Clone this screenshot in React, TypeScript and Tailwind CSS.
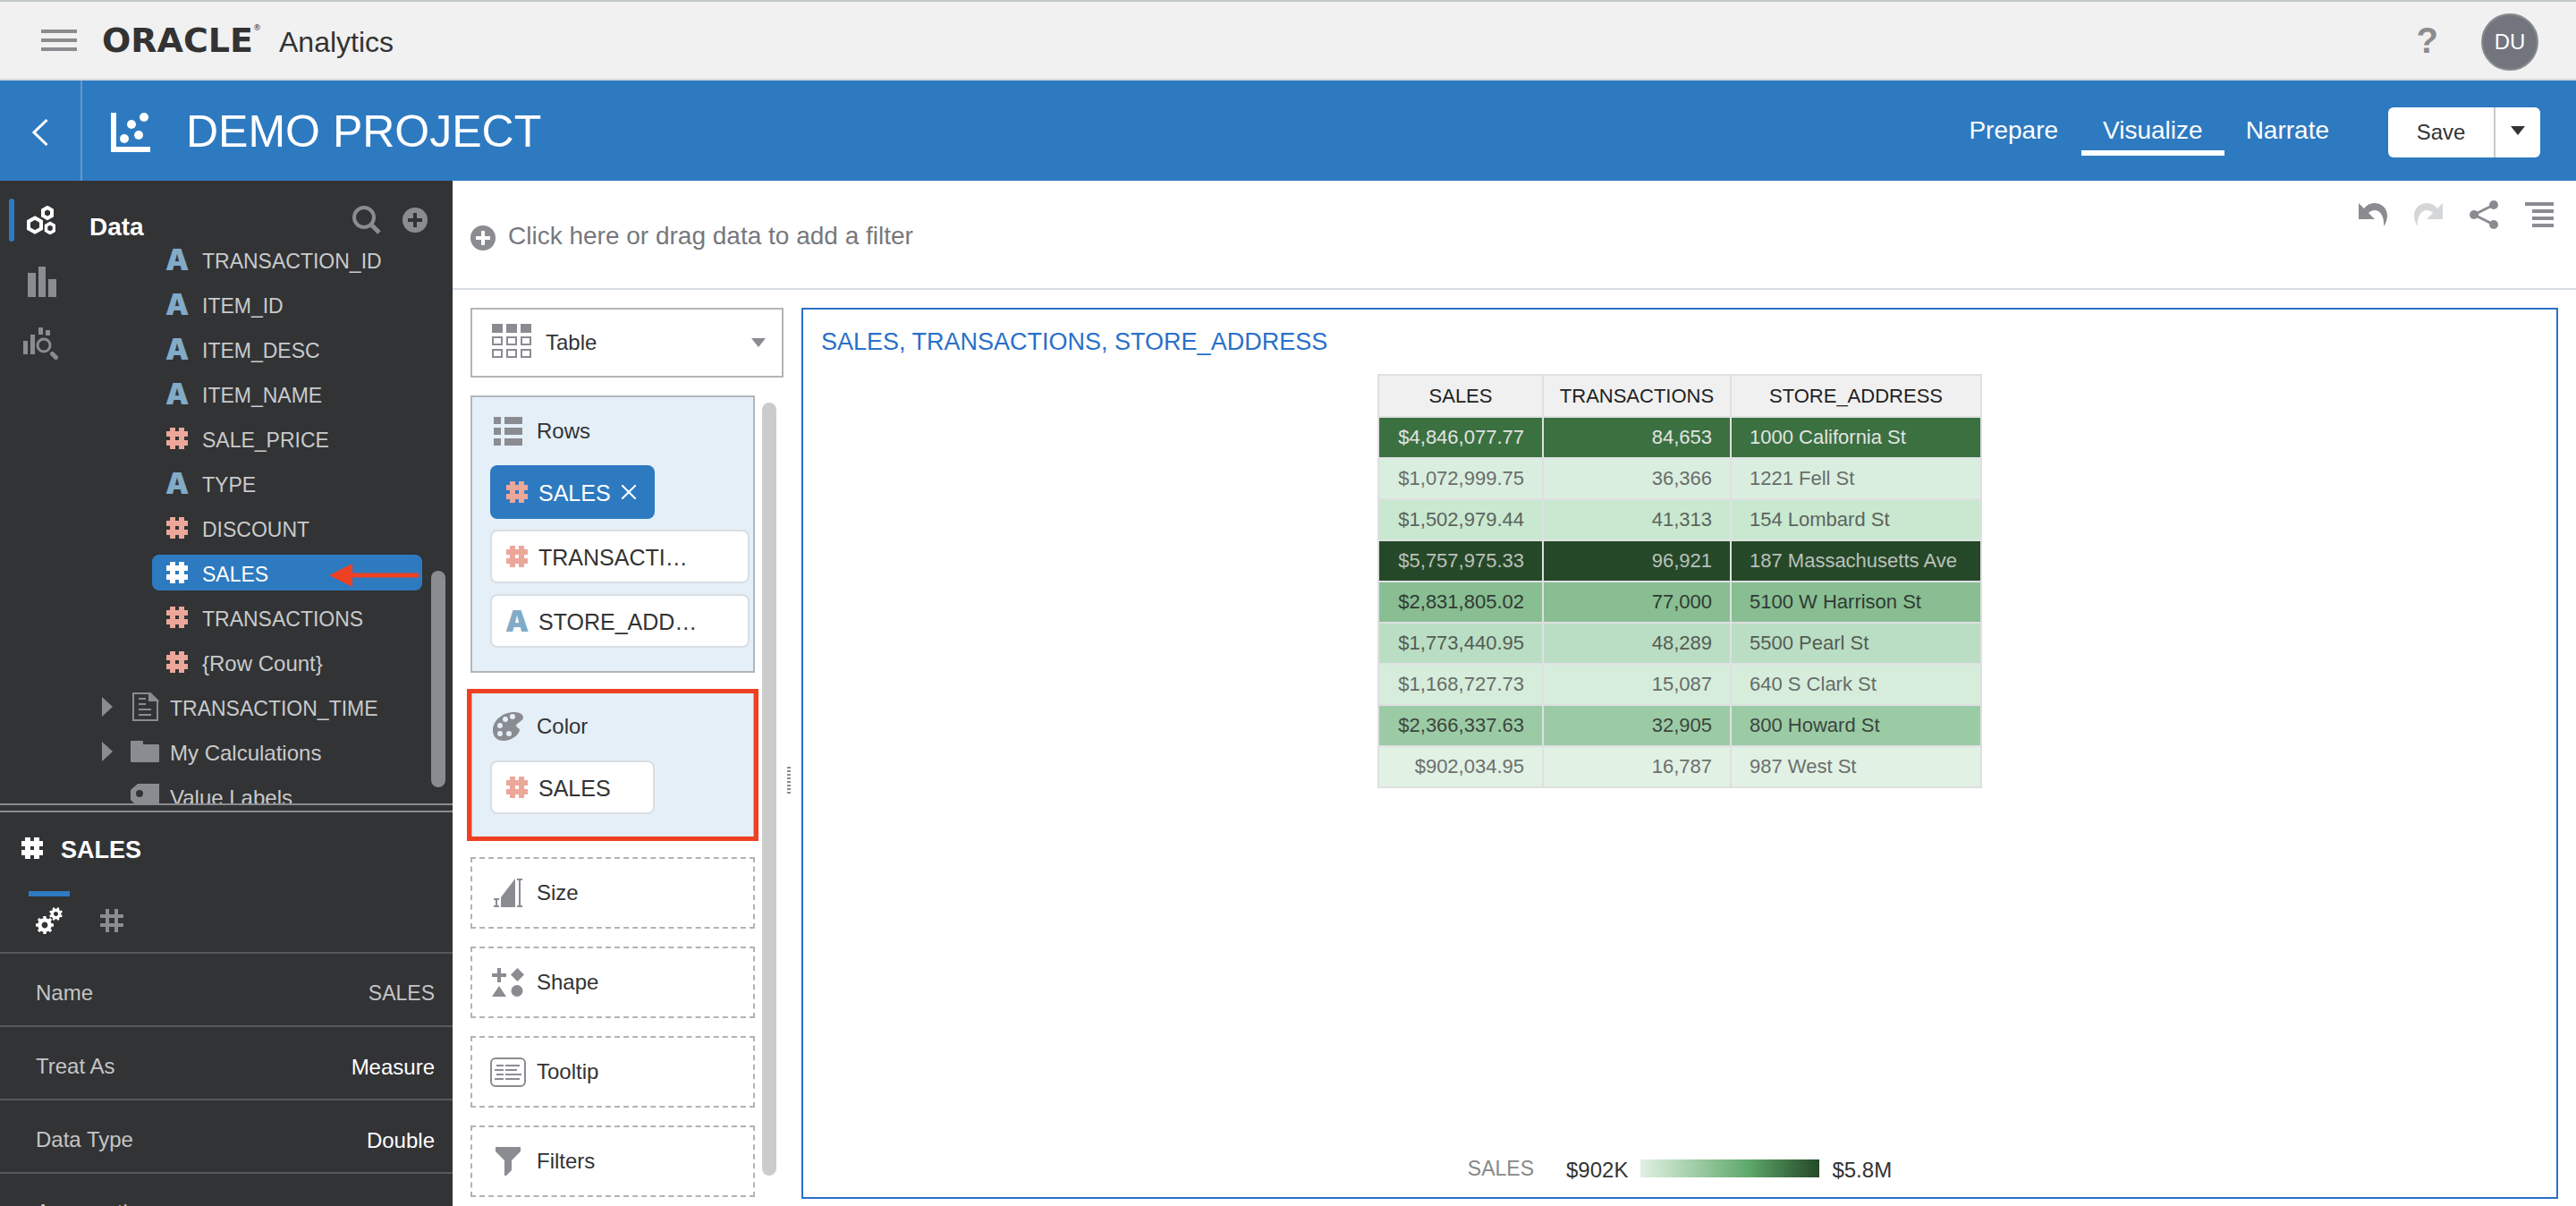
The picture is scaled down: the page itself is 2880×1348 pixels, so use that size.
import React from "react";

type Kind = "attribute" | "measure";

type Field = { name: string; kind: Kind; caps: boolean; selected?: boolean };

const fields: Field[] = [
  { name: "TRANSACTION_ID", kind: "attribute", caps: true },
  { name: "ITEM_ID", kind: "attribute", caps: true },
  { name: "ITEM_DESC", kind: "attribute", caps: true },
  { name: "ITEM_NAME", kind: "attribute", caps: true },
  { name: "SALE_PRICE", kind: "measure", caps: true },
  { name: "TYPE", kind: "attribute", caps: true },
  { name: "DISCOUNT", kind: "measure", caps: true },
  { name: "SALES", kind: "measure", caps: true, selected: true },
  { name: "TRANSACTIONS", kind: "measure", caps: true },
  { name: "{Row Count}", kind: "measure", caps: false },
];

const rows = [
  { sales: "$4,846,077.77", tx: "84,653", store: "1000 California St", tone: "bg-[#3b7041] text-[#e2e4e2]" },
  { sales: "$1,072,999.75", tx: "36,366", store: "1221 Fell St", tone: "bg-[#daeee0] text-[#686e6a]" },
  { sales: "$1,502,979.44", tx: "41,313", store: "154 Lombard St", tone: "bg-[#c9e8d0] text-[#5c645e]" },
  { sales: "$5,757,975.33", tx: "96,921", store: "187 Massachusetts Ave", tone: "bg-[#254928] text-[#bcc0bc]" },
  { sales: "$2,831,805.02", tx: "77,000", store: "5100 W Harrison St", tone: "bg-[#88be92] text-[#303a32]" },
  { sales: "$1,773,440.95", tx: "48,289", store: "5500 Pearl St", tone: "bg-[#badec3] text-[#545c56]" },
  { sales: "$1,168,727.73", tx: "15,087", store: "640 S Clark St", tone: "bg-[#d6eddc] text-[#666c68]" },
  { sales: "$2,366,337.63", tx: "32,905", store: "800 Howard St", tone: "bg-[#9bcba5] text-[#3c463e]" },
  { sales: "$902,034.95", tx: "16,787", store: "987 West St", tone: "bg-[#e1f1e4] text-[#6c706d]" },
];

const properties = [
  { label: "Name", value: "SALES", tone: "text-[23px] text-[#c4c5c6]" },
  { label: "Treat As", value: "Measure", tone: "pt-0.5 text-2xl text-white" },
  { label: "Data Type", value: "Double", tone: "pt-0.5 text-2xl text-white" },
];

function MeasureIcon({ className = "text-[#eba79a]" }: { className?: string }) {
  return (
    <svg className={"h-6 w-6 shrink-0 " + className} viewBox="0 0 24 24" fill="currentColor" aria-hidden="true">
      <rect x="4" y="0" width="6" height="24" />
      <rect x="14" y="0" width="6" height="24" />
      <rect x="0" y="4" width="24" height="6" />
      <rect x="0" y="14" width="24" height="6" />
    </svg>
  );
}

function KindIcon({ kind, selected }: { kind: Kind; selected?: boolean }) {
  if (kind === "measure") {
    return <MeasureIcon className={selected ? "text-white" : "text-[#eba79a]"} />;
  }
  return (
    <span
      aria-hidden="true"
      className="flex h-6 w-6 shrink-0 items-center justify-center font-[Inter,sans-serif] text-[33px] leading-none font-black text-[#82abc8]"
    >
      A
    </span>
  );
}

function PlusCircle({ plus }: { plus: string }) {
  return (
    <svg className="h-7 w-7" viewBox="0 0 28 28" aria-hidden="true">
      <circle cx="14" cy="14" r="14" fill="#8a8c91" />
      <path d="M14 6v16M6 14h16" stroke={plus} strokeWidth="4" />
    </svg>
  );
}

function Gear({ cx, cy, r, turn }: { cx: number; cy: number; r: number; turn: number }) {
  return (
    <g transform={`translate(${cx} ${cy}) rotate(${turn})`}>
      <circle r={r * 0.56} fill="none" stroke="currentColor" strokeWidth={r * 0.44} />
      {[0, 45, 90, 135, 180, 225, 270, 315].map((a) => (
        <rect
          key={a}
          x={-r * 0.17}
          y={-r}
          width={r * 0.34}
          height={r * 0.4}
          rx={r * 0.06}
          fill="currentColor"
          transform={`rotate(${a})`}
        />
      ))}
    </g>
  );
}

function Chip({ kind, children, wide }: { kind: Kind; children: React.ReactNode; wide?: boolean }) {
  return (
    <button
      type="button"
      className={
        "flex h-[60px] items-center gap-3 rounded-lg border-2 border-[#d8dee3] bg-white pl-4 text-[25px] leading-8 text-[#333] " +
        (wide ? "w-[290px]" : "w-[184px]")
      }
    >
      <KindIcon kind={kind} />
      <span className="pt-0.5">{children}</span>
    </button>
  );
}

function EdgeLabel({ icon, children }: { icon: React.ReactNode; children: React.ReactNode }) {
  return (
    <div className="flex h-[76px] items-center gap-3 pl-5 text-2xl text-[#333]">
      <span className="flex w-10 justify-center text-[#8a8c91]">{icon}</span>
      {children}
    </div>
  );
}

const sizeIcon = (
  <svg className="h-8 w-8" viewBox="0 0 32 32" fill="currentColor" aria-hidden="true">
    <path d="M0 22h6v2H4v6h2v2H0v-2h2v-6H0z" />
    <path d="M8 21L24 0v32H8z" />
    <path d="M26 0h6v2h-2v28h2v2h-6v-2h2V2h-2z" />
  </svg>
);

const shapeIcon = (
  <svg className="h-8 w-9" viewBox="0 0 36 32" fill="currentColor" aria-hidden="true">
    <path d="M6 0h4v6h6v4h-6v6H6v-6H0V6h6z" />
    <path d="M28.500 0l7.500 7.500-7.500 7.500L21 7.500z" />
    <path d="M8 20l8 12H0z" />
    <circle cx="28" cy="25.500" r="6.500" />
  </svg>
);

const tooltipIcon = (
  <svg className="h-[34px] w-10" viewBox="0 0 40 34" fill="none" stroke="currentColor" strokeWidth="2" aria-hidden="true">
    <rect x="1" y="2" width="38" height="31" rx="5" />
    <path d="M7 10h8M17 10h16M5 15h10M17 15h13M7 20h8M17 20h18M5 25h10M17 25h16" />
  </svg>
);

const filterIcon = (
  <svg className="h-[34px] w-[30px]" viewBox="0 0 30 34" fill="currentColor" aria-hidden="true">
    <path d="M1 1h28v5L19 16v11l-6 6h-2V16L1 6z" />
  </svg>
);

const dropTargets = [
  { label: "Size", icon: sizeIcon },
  { label: "Shape", icon: shapeIcon },
  { label: "Tooltip", icon: tooltipIcon },
  { label: "Filters", icon: filterIcon },
];

function TopBar() {
  return (
    <header className="flex h-[90px] shrink-0 items-center border-t-2 border-b-2 border-t-[#c3c8c8] border-b-[#d6dade] bg-[#f1f1f1] pr-[42px] pl-[46px]">
      <button type="button" aria-label="Menu" className="flex w-10 flex-col gap-1.5">
        <span className="h-1 bg-[#8b8c8f]" />
        <span className="h-1 bg-[#8b8c8f]" />
        <span className="h-1 bg-[#8b8c8f]" />
      </button>
      <div className="ml-7 flex items-baseline pt-0.5 text-[#333]">
        <span className="flex w-[198px] items-start font-['DejaVu_Sans',sans-serif] text-[38px] leading-10 font-bold">
          ORACLE
          <sup className="text-[9px] leading-[20px] font-normal">®</sup>
        </span>
        <span className="text-[32px] leading-10">Analytics</span>
      </div>
      <button type="button" aria-label="Help" className="ml-auto text-[40px] leading-none font-bold text-[#8b8c8f]">
        ?
      </button>
      <button
        type="button"
        className="mt-1 ml-12 h-16 w-16 rounded-full border-2 border-[#888c8f] bg-[#73757e] text-2xl text-white"
      >
        DU
      </button>
    </header>
  );
}

function ProjectBar() {
  return (
    <div className="flex h-28 shrink-0 items-center bg-[#2e7ac1] pr-10 text-white">
      <button
        type="button"
        aria-label="Back"
        className="flex h-full w-[92px] items-center justify-center border-r-2 border-[#6199cf]"
      >
        <svg className="mt-1 h-[30px] w-[18px]" viewBox="0 0 18 30" fill="none" stroke="currentColor" strokeWidth="3" aria-hidden="true">
          <path d="M16.500 1L2 15l14.500 14" />
        </svg>
      </button>
      <svg className="mt-1 ml-8 h-11 w-11" viewBox="0 0 44 44" fill="currentColor" aria-hidden="true">
        <path d="M0 0h6v38h38v6H0z" />
        <circle cx="15" cy="29" r="5" />
        <circle cx="23" cy="13" r="5" />
        <circle cx="31" cy="25" r="5" />
        <circle cx="37" cy="5" r="5" />
      </svg>
      <h1 className="ml-10 pt-0.5 text-[50px] leading-[56px]">DEMO PROJECT</h1>
      <nav className="ml-auto flex pt-2 text-[28px] leading-10">
        <a href="#prepare" className="h-12 pr-[26px]">Prepare</a>
        <a href="#visualize" className="h-12 border-b-[6px] border-white px-6">Visualize</a>
        <a href="#narrate" className="h-12 pl-6">Narrate</a>
      </nav>
      <div className="mt-1 ml-[66px] flex h-14 overflow-hidden rounded-md bg-white text-[#333]">
        <button type="button" className="w-[120px] border-r-2 border-[#c8cacc] text-2xl">Save</button>
        <button type="button" aria-label="More save options" className="flex w-[50px] items-center justify-center">
          <svg className="mb-1 h-2.5 w-4" viewBox="0 0 16 10" aria-hidden="true">
            <path d="M0 0h16L8 10z" fill="#333" />
          </svg>
        </button>
      </div>
    </div>
  );
}

function Rail() {
  return (
    <nav className="flex w-20 shrink-0 flex-col pt-5 text-[#8a8c91]">
      <button type="button" aria-label="Data" className="flex h-12 items-center pl-2.5 text-white">
        <span className="h-12 w-1.5 rounded-sm bg-[#2e7ac1]" />
        <svg className="ml-3.5 h-8 w-8" viewBox="0 0 32 32" fill="none" stroke="currentColor" strokeWidth="4" aria-hidden="true">
          <path d="M23 2l5 3v6l-5 3-5-3V5z" />
          <path d="M9 13.500l7 4v8l-7 4-7-4v-8z" />
          <path d="M26 19.500l4.500 2.700v5.600L26 30.500l-4.500-2.700v-5.600z" strokeWidth="3.500" />
        </svg>
      </button>
      <button type="button" aria-label="Visualizations" className="mt-7 flex pl-[31px]">
        <svg className="h-[34px] w-8" viewBox="0 0 32 34" fill="currentColor" aria-hidden="true">
          <path d="M0 7h9v27H0zM12 0h8v34h-8zM23 14h9v20h-9z" />
        </svg>
      </button>
      <button type="button" aria-label="Analytics" className="mt-[34px] flex pl-[26px]">
        <svg className="h-9 w-10" viewBox="0 0 40 36" aria-hidden="true">
          <path fill="currentColor" d="M0 15h5v15H0zM8 8h5v22H8zM17 0h5v8h-5zM25 3h5v6h-5z" />
          <circle cx="23" cy="20" r="7" fill="none" stroke="currentColor" strokeWidth="3" />
          <path d="M32.500 29.500l4 4" stroke="currentColor" strokeWidth="5" strokeLinecap="round" />
        </svg>
      </button>
    </nav>
  );
}

function Twisty() {
  return (
    <svg className="h-[22px] w-3" viewBox="0 0 12 22" fill="#8a8c91" aria-hidden="true">
      <path d="M0 0l12 11L0 22z" />
    </svg>
  );
}

function DataTree() {
  return (
    <div className="flex min-w-0 flex-1 flex-col">
      <div className="flex h-[63px] shrink-0 items-start pt-7 pr-7 pl-5">
        <h2 className="pt-1.5 text-[28px] leading-9 font-bold text-white">Data</h2>
        <button type="button" aria-label="Search" className="ml-auto text-[#8a8c91]">
          <svg className="h-8 w-8" viewBox="0 0 32 32" fill="none" stroke="currentColor" aria-hidden="true">
            <circle cx="13" cy="13" r="11" strokeWidth="4" />
            <path d="M21 21l9 9" strokeWidth="5" />
          </svg>
        </button>
        <button type="button" aria-label="Add" className="mt-0.5 ml-6">
          <PlusCircle plus="#323335" />
        </button>
      </div>
      <div className="relative min-h-0 flex-1 overflow-hidden text-[#c9cacb]">
        <ul className="pr-[34px]">
          {fields.map((f) => (
            <li key={f.name} className="flex h-[50px] items-center pl-[90px]">
              <button
                type="button"
                className={
                  "relative flex h-10 w-full items-center gap-4 rounded-lg pl-4 whitespace-nowrap " +
                  (f.caps ? "text-[23px] " : "text-2xl ") +
                  (f.selected ? "bg-[#2e7ac1] text-white" : "")
                }
              >
                <KindIcon kind={f.kind} selected={f.selected} />
                <span className="pt-1 leading-8">{f.name}</span>
                {f.selected && (
                  <svg className="absolute top-2.5 right-1 h-[26px] w-[100px]" viewBox="0 0 100 26" fill="#ee4023" aria-hidden="true">
                    <path d="M0 13L26 0v10.500h74v5H26V26z" />
                  </svg>
                )}
              </button>
            </li>
          ))}
          <li className="flex h-[50px] items-center pl-[34px]">
            <Twisty />
            <svg className="ml-[22px] h-8 w-[30px]" viewBox="0 0 30 32" fill="none" stroke="#8a8c91" strokeWidth="2" aria-hidden="true">
              <path d="M1 1h19l8 8v22H1z" />
              <path d="M19 1v8h9z" fill="#8a8c91" />
              <path d="M7 7h8M7 13h8M7 19h14M7 25h14" />
            </svg>
            <span className="ml-3 pt-1 text-[23px] leading-8">TRANSACTION_TIME</span>
          </li>
          <li className="flex h-[50px] items-center pl-[34px]">
            <Twisty />
            <svg className="ml-5 h-6 w-8" viewBox="0 0 32 24" fill="#8a8c91" aria-hidden="true">
              <path d="M1 0h12q1 0 1 1v3h17q1 0 1 1v18q0 1-1 1H1q-1 0-1-1V1q0-1 1-1z" />
            </svg>
            <span className="ml-3 pt-1 text-2xl leading-8">My Calculations</span>
          </li>
          <li className="flex h-[50px] items-center pl-[66px]">
            <svg className="h-7 w-8" viewBox="0 0 32 28" fill="#8a8c91" aria-hidden="true">
              <path fillRule="evenodd" d="M8 0h24v26H8L0 18V7zM10 7a4 4 0 1 0 0 8 4 4 0 0 0 0-8z" />
            </svg>
            <span className="ml-3 pt-1 text-2xl leading-8">Value Labels</span>
          </li>
        </ul>
        <div className="absolute right-2 bottom-[18px] h-[242px] w-4 rounded-full bg-[#8a8c91]" />
      </div>
    </div>
  );
}

function PropertiesPane() {
  return (
    <section className="h-[450px] shrink-0 overflow-hidden border-t-2 border-[#888b90]">
      <div className="mt-1.5 border-t-2 border-[#888b90]" />
      <div className="flex h-20 items-center gap-5 pl-6 text-white">
        <MeasureIcon className="text-white" />
        <h3 className="pt-1 text-[27px] leading-9 font-bold">SALES</h3>
      </div>
      <div className="flex h-[78px] items-start border-b-2 border-[#56585b] pt-2 pl-8">
        <button type="button" aria-label="General" className="flex w-[46px] flex-col items-center border-t-[6px] border-[#2e7ac1] pt-3 text-white">
          <svg className="h-[30px] w-[30px]" viewBox="0 0 30 30" aria-hidden="true">
            <Gear cx={10} cy={20} r={10} turn={0} />
            <Gear cx={22.5} cy={7.5} r={7.5} turn={22} />
          </svg>
        </button>
        <button type="button" aria-label="Number format" className="mt-5 ml-[34px]">
          <svg className="h-[26px] w-[26px]" viewBox="0 0 26 26" stroke="#8a8c91" strokeWidth="4" aria-hidden="true">
            <path d="M8 0v26M18 0v26M0 8h26M0 18h26" />
          </svg>
        </button>
      </div>
      <dl className="text-2xl text-[#c4c5c6]">
        {properties.map((p) => (
          <div key={p.label} className="flex h-[82px] items-center justify-between border-b-2 border-[#56585b] pt-2 pr-5 pl-10">
            <dt>{p.label}</dt>
            <dd className={p.tone}>{p.value}</dd>
          </div>
        ))}
        <div className="flex h-[82px] items-center pt-1 pl-10">
          <dt>Aggregation</dt>
        </div>
      </dl>
    </section>
  );
}

function FilterBar() {
  return (
    <div className="flex h-[122px] shrink-0 items-center justify-between border-b-2 border-[#d8dde3] pr-[25px] pl-5">
      <button type="button" className="flex items-center gap-3.5 pt-2 text-[28px] leading-9 text-[#77787b]">
        <PlusCircle plus="#ffffff" />
        <span className="pb-1">Click here or drag data to add a filter</span>
      </button>
      <div className="-mt-11 flex items-center gap-[30px] text-[#8a8c91]">
        <button type="button" aria-label="Undo">
          <svg className="h-[26px] w-8" viewBox="0 0 32 26" fill="currentColor" aria-hidden="true">
            <path d="M0 0l6 6C9 2 13 0 17 0c9 0 15 6 15 14 0 5-2 9-4 12 1-11-4-18-10-18-3 0-5 1-7 3l7 7H0z" />
          </svg>
        </button>
        <button type="button" aria-label="Redo" className="text-[#d5d6d8]">
          <svg className="h-[26px] w-8" viewBox="0 0 32 26" fill="currentColor" aria-hidden="true">
            <path d="M32 0l-6 6C23 2 19 0 15 0 6 0 0 6 0 14c0 5 2 9 4 12C3 15 8 8 14 8c3 0 5 1 7 3l-7 7h18z" />
          </svg>
        </button>
        <button type="button" aria-label="Share">
          <svg className="h-8 w-8" viewBox="0 0 32 32" fill="currentColor" aria-hidden="true">
            <circle cx="5" cy="16" r="5" />
            <circle cx="27" cy="5" r="5" />
            <circle cx="27" cy="27" r="5" />
            <path d="M27 5L5 16l22 11" fill="none" stroke="currentColor" strokeWidth="3" />
          </svg>
        </button>
        <button type="button" aria-label="Canvas menu">
          <svg className="h-7 w-8" viewBox="0 0 32 28" fill="currentColor" aria-hidden="true">
            <path d="M0 0h32v4H0zM8 8h24v4H8zM8 16h24v4H8zM8 24h24v4H8z" />
          </svg>
        </button>
      </div>
    </div>
  );
}

function GrammarPanel() {
  return (
    <aside className="flex w-[350px] shrink-0 flex-col gap-5">
      <div className="relative">
        <select
          aria-label="Visualization type"
          className="h-[78px] w-full appearance-none border-2 border-[#b3b5b7] bg-white pl-[82px] text-2xl text-[#333]"
        >
          <option>Table</option>
        </select>
        <svg className="pointer-events-none absolute top-[18px] left-6 h-[38px] w-11" viewBox="0 0 44 38" fill="none" stroke="#8a8c91" strokeWidth="2" aria-hidden="true">
          <path fill="#8a8c91" d="M1 1h10v8H1zM17 1h10v8H17zM33 1h10v8H33z" />
          <path d="M1 15h10v8H1zM17 15h10v8H17zM33 15h10v8H33zM1 29h10v8H1zM17 29h10v8H17zM33 29h10v8H33z" />
        </svg>
        <svg className="pointer-events-none absolute top-[34px] right-5 h-2.5 w-4" viewBox="0 0 16 10" aria-hidden="true">
          <path d="M0 0h16L8 10z" fill="#8a8c91" />
        </svg>
      </div>
      <div className="flex justify-between pr-2">
        <div className="flex w-[318px] flex-col gap-5">
          <section className="border-2 border-[#b3b5b7] bg-[#e5eff8] pb-[26px]">
            <EdgeLabel
              icon={
                <svg className="h-8 w-8" viewBox="0 0 32 32" fill="currentColor" aria-hidden="true">
                  <path d="M0 0h8v8H0zM12 0h20v8H12zM0 12h8v8H0zM12 12h20v8H12zM0 24h8v8H0zM12 24h20v8H12z" />
                </svg>
              }
            >
              Rows
            </EdgeLabel>
            <div className="flex flex-col gap-3 pl-5">
              <button type="button" className="flex h-[60px] w-[184px] items-center gap-3 rounded-lg bg-[#2e7ac1] pl-[18px] text-[25px] leading-8 text-white">
                <MeasureIcon />
                <span className="pt-0.5">SALES</span>
                <svg className="h-4 w-4" viewBox="0 0 16 16" fill="none" stroke="currentColor" strokeWidth="2" aria-hidden="true">
                  <path d="M0 0l16 16M16 0L0 16" />
                </svg>
              </button>
              <Chip kind="measure" wide>TRANSACTI…</Chip>
              <Chip kind="attribute" wide>STORE_ADD…</Chip>
            </div>
          </section>
          <section className="relative border-2 border-[#b3b5b7] bg-[#e5eff8] pb-[26px]">
            <EdgeLabel
              icon={
                <svg className="h-8 w-[34px]" viewBox="0 0 34 32" fill="currentColor" aria-hidden="true">
                  <path d="M34 6C34 2 29 0 24 0 10 0 0 10 0 20c0 8 5 12 12 12 8 0 17-6 18-12 0-2-3-2-4-5 0-3 8-5 8-9z" />
                  <g fill="#e5eff8">
                    <circle cx="8" cy="15" r="3" />
                    <circle cx="14" cy="8" r="3" />
                    <circle cx="22" cy="5" r="3" />
                    <circle cx="8" cy="24" r="3" />
                    <circle cx="18" cy="24" r="3" />
                  </g>
                </svg>
              }
            >
              Color
            </EdgeLabel>
            <div className="pl-5">
              <Chip kind="measure">SALES</Chip>
            </div>
            <div className="pointer-events-none absolute -inset-x-[6px] -inset-y-[4px] border-[5px] border-[#ee4023]" />
          </section>
          {dropTargets.map((t) => (
            <section key={t.label} className="border-2 border-dashed border-[#b3b3b3]">
              <EdgeLabel icon={t.icon}>{t.label}</EdgeLabel>
            </section>
          ))}
        </div>
        <div className="mt-2 mb-6 w-4 rounded-full bg-[#ccc]" />
      </div>
    </aside>
  );
}

function Visualization() {
  return (
    <section className="flex min-w-0 flex-1 flex-col items-center border-2 border-[#2a70c8]">
      <h2 className="mt-4 self-start pl-5 text-[27px] leading-10 text-[#2a70c8]">SALES, TRANSACTIONS, STORE_ADDRESS</h2>
      <table className="mt-4 border-collapse text-[22px] leading-8">
        <thead className="bg-[#f0f0f1] text-[#222]">
          <tr className="h-[47px]">
            <th scope="col" className="w-[184px] border-2 border-[#dee0e1] px-5 font-normal">SALES</th>
            <th scope="col" className="w-[210px] border-2 border-[#dee0e1] px-4 font-normal">TRANSACTIONS</th>
            <th scope="col" className="w-[280px] border-2 border-[#dee0e1] px-5 font-normal">STORE_ADDRESS</th>
          </tr>
        </thead>
        <tbody>
          {rows.map((r) => (
            <tr key={r.store} className={"h-[46px] " + r.tone}>
              <td className="border-2 border-[#dee0e1] pr-5 text-right">{r.sales}</td>
              <td className="border-2 border-[#dee0e1] pr-5 text-right">{r.tx}</td>
              <td className="border-2 border-[#dee0e1] px-5 whitespace-nowrap">{r.store}</td>
            </tr>
          ))}
        </tbody>
      </table>
      <div className="mt-auto mb-3.5 flex items-center text-2xl text-[#333]">
        <span className="mr-9 text-[23px] text-[#888]">SALES</span>
        <span className="pt-1">$902K</span>
        <span className="mx-3.5 h-5 w-[200px] bg-linear-to-r from-[#e1f1e4] via-[#5fa96c] via-60% to-[#254928]" />
        <span className="pt-1">$5.8M</span>
      </div>
    </section>
  );
}

export default function App() {
  return (
    <div className="flex h-screen flex-col overflow-hidden bg-white font-['Liberation_Sans',Arial,sans-serif]">
      <TopBar />
      <ProjectBar />
      <div className="flex min-h-0 flex-1">
        <div className="flex w-[506px] shrink-0 flex-col bg-[#323335]">
          <div className="flex min-h-0 flex-1">
            <Rail />
            <DataTree />
          </div>
          <PropertiesPane />
        </div>
        <main className="flex min-w-0 flex-1 flex-col">
          <FilterBar />
          <div className="flex min-h-0 flex-1 py-5 pr-5 pl-5">
            <GrammarPanel />
            <div className="flex w-5 shrink-0 items-center pl-1">
              <div className="flex flex-col gap-0.5 pt-[72px]">
                {[0, 1, 2, 3, 4, 5, 6, 7].map((i) => (
                  <span key={i} className="h-0.5 w-1 bg-[#8a8c91]" />
                ))}
              </div>
            </div>
            <div className="-mb-3 flex min-w-0 flex-1">
              <Visualization />
            </div>
          </div>
        </main>
      </div>
    </div>
  );
}
